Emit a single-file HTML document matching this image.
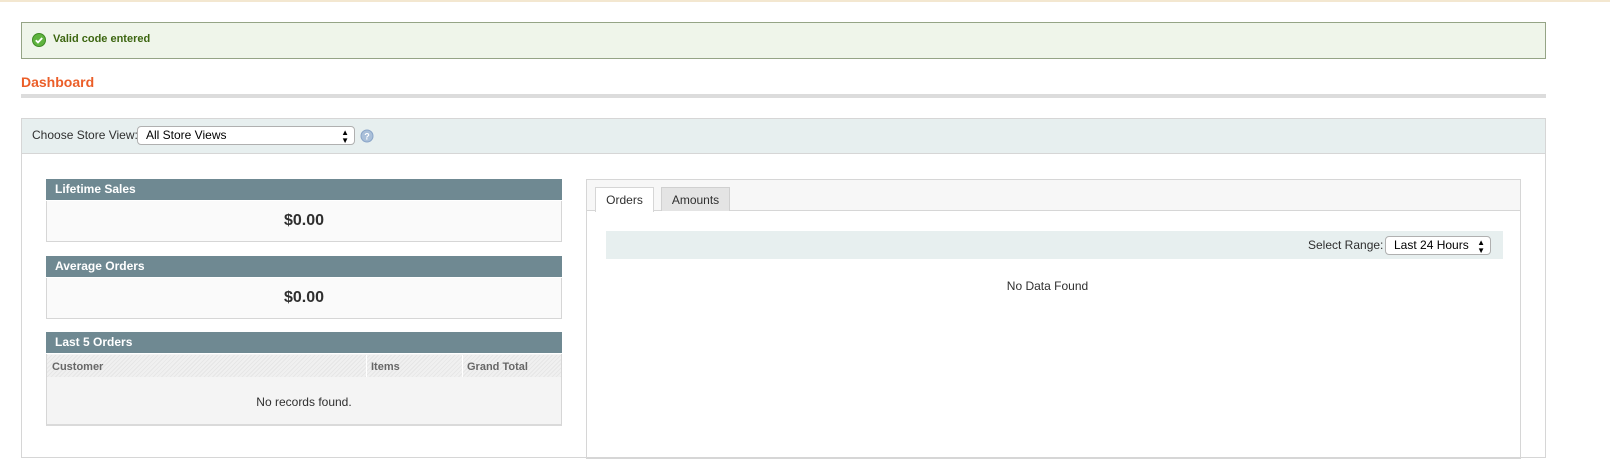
<!DOCTYPE html>
<html><head><style>
*{margin:0;padding:0;box-sizing:border-box}
body{width:1610px;height:451px;overflow:hidden;background:#fff;font-family:"Liberation Sans",Arial,sans-serif;font-size:12px;color:#2f2f2f;position:relative}
.a{position:absolute}
.hdr{background:#6f8992;color:#fff;font-weight:bold;font-size:12px;padding-left:9px;line-height:21px;border-bottom:1px solid #fff}
.box{background:#fafafa;border:1px solid #d6d6d6;border-top:none;text-align:center;font-weight:bold;font-size:16px;color:#2f2f2f}
.sel{background:#fff;border:1px solid #b0b0b0;border-radius:4px;font-size:12px;color:#000;padding-left:8px}
</style></head><body>
<div class="a" style="left:0;top:0;width:1610px;height:2px;background:#f3e7d0"></div>
<div class="a" style="left:21px;top:22px;width:1525px;height:37px;background:#eff5ea;border:1px solid #95a486"></div>
<svg class="a" style="left:32px;top:33px" width="14" height="14" viewBox="0 0 14 14"><circle cx="7" cy="7" r="6.5" fill="#5fb33f" stroke="#3f8a26"/><path d="M3.8 7.2l2.2 2.2 4.2-4.4" stroke="#fff" stroke-width="1.8" fill="none"/></svg>
<div class="a" style="left:53px;top:33px;font-weight:bold;font-size:11px;color:#3d6611">Valid code entered</div>
<div class="a" style="left:21px;top:74px;font-weight:bold;font-size:14px;color:#eb5e28">Dashboard</div>
<div class="a" style="left:21px;top:94px;width:1525px;height:4px;background:#dcdcdc"></div>
<div class="a" style="left:21px;top:118px;width:1525px;height:340px;border:1px solid #d6d6d6"></div>
<div class="a" style="left:22px;top:119px;width:1523px;height:35px;background:#e7efef;border-bottom:1px solid #d6d6d6"></div>
<div class="a" style="left:32px;top:128px;font-size:12px">Choose Store View:</div>
<div class="a sel" style="left:137px;top:126px;width:218px;height:19px;line-height:17px">All Store Views<span style="position:absolute;right:5px;top:0;font-size:8px;line-height:8px;top:2px">▲<br>▼</span></div>
<svg class="a" style="left:360px;top:129px" width="14" height="14"><circle cx="7" cy="7" r="6" fill="#a9bfd9" stroke="#8aa5c8"/><text x="7" y="10.5" font-size="9" font-weight="bold" fill="#fff" text-anchor="middle" font-family="Liberation Sans">?</text></svg>

<div class="a hdr" style="left:46px;top:179px;width:516px;height:22px">Lifetime Sales</div>
<div class="a box" style="left:46px;top:201px;width:516px;height:41px;line-height:39px">$0.00</div>
<div class="a hdr" style="left:46px;top:256px;width:516px;height:22px">Average Orders</div>
<div class="a box" style="left:46px;top:278px;width:516px;height:41px;line-height:39px">$0.00</div>
<div class="a hdr" style="left:46px;top:332px;width:516px;height:22px">Last 5 Orders</div>
<div class="a" style="left:46px;top:354px;width:516px;height:72px;background:#f4f4f4;border:1px solid #d6d6d6;border-top:none;border-bottom:2px solid #dadada"></div>
<div class="a" style="left:47px;top:355px;width:514px;height:22px;background:repeating-linear-gradient(135deg,#e6e6e6 0 1px,#f0f0f0 1px 3px);font-weight:bold;font-size:11px;color:#676767;line-height:24px">
<span class="a" style="left:5px">Customer</span>
<span class="a" style="left:319px;top:0;height:22px;border-left:1px solid #fff;padding-left:4px">Items</span>
<span class="a" style="left:415px;top:0;height:22px;border-left:1px solid #fff;padding-left:4px">Grand Total</span></div>
<div class="a" style="left:46px;top:395px;width:516px;text-align:center;font-size:12px">No records found.</div>

<div class="a" style="left:586px;top:179px;width:935px;height:280px;border:1px solid #d6d6d6"></div>
<div class="a" style="left:587px;top:180px;width:933px;height:31px;background:#f7f7f7;border-bottom:1px solid #d6d6d6"></div>
<div class="a" style="left:595px;top:187px;width:59px;height:25px;background:#fff;border:1px solid #d6d6d6;border-bottom:none;text-align:center;line-height:24px">Orders</div>
<div class="a" style="left:661px;top:187px;width:69px;height:24px;background:#e4e4e4;border:1px solid #d0d0d0;border-bottom:none;text-align:center;line-height:24px">Amounts</div>
<div class="a" style="left:606px;top:231px;width:897px;height:28px;background:#e7efef"></div>
<div class="a" style="left:1308px;top:238px">Select Range:</div>
<div class="a sel" style="left:1385px;top:236px;width:106px;height:19px;line-height:17px">Last 24 Hours<span style="position:absolute;right:5px;top:2px;font-size:8px;line-height:8px">▲<br>▼</span></div>
<div class="a" style="left:586px;top:279px;width:923px;text-align:center">No Data Found</div>
</body></html>
